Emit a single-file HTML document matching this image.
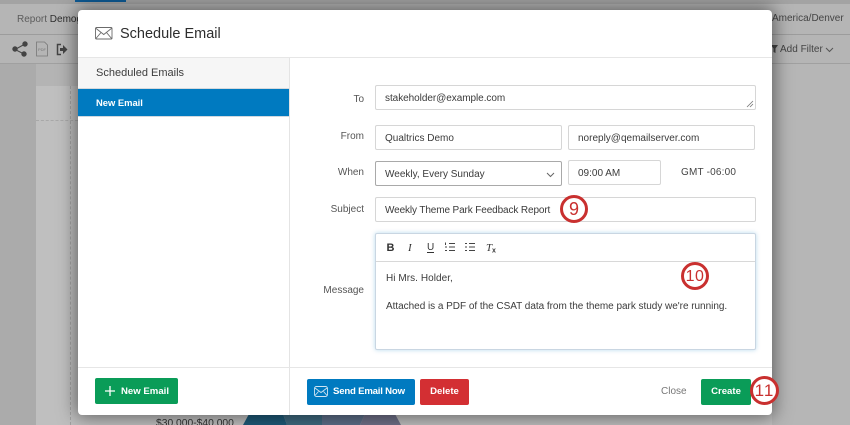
<!DOCTYPE html>
<html><head><meta charset="utf-8">
<style>
html,body{margin:0;padding:0;width:850px;height:425px;overflow:hidden;background:#b4b4b4;font-family:"Liberation Sans",sans-serif}
#w{position:relative;width:850px;height:425px;overflow:hidden;filter:blur(.3px)}
.a{position:absolute;white-space:nowrap}
.t{position:absolute;white-space:nowrap;font-size:10px;line-height:14px;color:#3b3b3b}
.l{position:absolute;right:486px;font-size:10px;line-height:14px;color:#555;white-space:nowrap}
.i{position:absolute;box-sizing:border-box;background:#fff;border:1px solid #d6d6d6;border-radius:2px;font-size:10px;color:#3b3b3b;padding-left:9px;white-space:nowrap}
.b{position:absolute;box-sizing:border-box;border-radius:2px;color:#fff;font-size:9.6px;font-weight:bold;text-align:center;white-space:nowrap}
.c{position:absolute;box-sizing:border-box;border:3px solid #c9302f;border-radius:50%;background:#fff;color:#c9302f;text-align:center}
</style></head><body><div id="w">
<div class="a" style="left:0;top:0;width:850px;height:4px;background:#a3a3a3"></div>
<div class="a" style="left:75px;top:0;width:51px;height:2px;background:#0e5a94"></div>
<div class="a" style="left:0;top:4px;width:850px;height:30px;background:#b5b5b5;border-bottom:1px solid #9c9c9c"></div>
<div class="a" style="left:0;top:35px;width:850px;height:28px;background:#b5b5b5;border-bottom:1px solid #a0a0a0"></div>
<div class="t" style="left:17px;top:13px;color:#5c5c5c">Report <span style="color:#2e2e2e">Demog</span></div>
<div class="t" style="left:772px;top:12px;color:#444">America/Denver</div>
<div class="t" style="left:780px;top:43px;color:#444">Add Filter</div>
<svg class="a" style="left:770px;top:44px" width="10" height="10"><path d="M1 1H8L5.500 4.500V9L3.500 8V4.500Z" fill="#444"/></svg>
<svg class="a" style="left:825px;top:47px" width="10" height="6"><path d="M1 1L4.500 4.500L8 1" fill="none" stroke="#555"/></svg>
<svg class="a" style="left:12px;top:40px" width="60" height="20" fill="none" stroke="#444">
<path d="M13 4L3 9.500L12 14" stroke-width="1"/><circle cx="3" cy="9" r="2.200" fill="#444"/><circle cx="13" cy="4" r="2.200" fill="#444"/><circle cx="12" cy="14" r="2.200" fill="#444"/>
<path d="M24.500 2H32.500L35.500 5V16H24.500Z" stroke="#777" stroke-width=".8"/>
<text x="26" y="11" font-size="4" fill="#777" stroke="none" font-family="Liberation Sans">PDF</text>
<path d="M49 4.500H45.500V14.500H49" stroke-width="1.500"/><path d="M48 8H51V5L55.500 9.500L51 14V11H48Z" fill="#444" stroke="none"/></svg>
<div class="a" style="left:36px;top:86px;width:814px;height:339px;background:#bfbfbf"></div>
<div class="a" style="left:0;top:64px;width:36px;height:361px;background:#ababab"></div>
<div class="a" style="left:772px;top:64px;width:78px;height:361px;background:#b6b6b6"></div>
<div class="a" style="left:70px;top:86px;height:339px;border-left:1px dashed #a2a2a2"></div>
<div class="a" style="left:36px;top:120px;width:42px;border-top:1px dashed #a8a8a8"></div>
<div class="t" style="left:156px;top:417px;color:#333;font-size:10.300px">$30,000-$40,000</div>
<svg class="a" style="left:238px;top:414px" width="170" height="11"><path d="M5 11L11 0H45L49 11Z" fill="#1e5a78"/><path d="M45 0H84V11H49Z" fill="#3f6a80"/><path d="M84 0H127L122 11H84Z" fill="#5c6e88"/><path d="M127 0H157L163 11H122Z" fill="#6f7088"/></svg>
<div class="a" style="left:78px;top:10px;width:694px;height:405px;background:#fff;border-radius:4px;box-shadow:0 0 18px 2px rgba(0,0,0,.5)"></div>
<svg class="a" style="left:95px;top:27px" width="18" height="13" fill="none" stroke="#6b6b6b" stroke-width=".9"><rect x=".5" y=".5" width="16.500" height="11.500" rx="1"/><path d="M.5 1L8.750 7.500L17 1M.5 12L6 5.500M17 12L11.500 5.500"/></svg>
<div class="a" style="left:120px;top:25px;font-size:14.500px;line-height:18px;color:#2d2d2d">Schedule Email</div>
<div class="a" style="left:78px;top:57px;width:694px;height:1px;background:#e6e6e6"></div>
<div class="a" style="left:78px;top:58px;width:211px;height:30px;background:#f6f6f6;border-bottom:1px solid #d5d9dd"></div>
<div class="a" style="left:96px;top:66px;font-size:11px;line-height:14px;color:#3d3d3d">Scheduled Emails</div>
<div class="a" style="left:78px;top:89px;width:211px;height:27px;background:#007ac0;border-bottom:1px solid #cfd8e0"></div>
<div class="a" style="left:96px;top:96px;font-size:9.400px;line-height:14px;color:#fff;font-weight:bold">New Email</div>
<div class="a" style="left:289px;top:58px;width:1px;height:357px;background:#e4e4e4"></div>
<div class="a" style="left:78px;top:367px;width:694px;height:1px;background:#e6e6e6"></div>
<div class="l" style="top:93px">To</div>
<div class="l" style="top:130px">From</div>
<div class="l" style="top:166px">When</div>
<div class="l" style="top:203px">Subject</div>
<div class="l" style="top:284px">Message</div>
<div class="i" style="left:375px;top:85px;width:381px;height:25px;line-height:25px;letter-spacing:-.05px">stakeholder@example.com
<svg class="a" style="right:1px;bottom:1px" width="9" height="9" stroke="#777" stroke-width=".8"><path d="M2 8L8 2M5 8L8 5"/></svg></div>
<div class="i" style="left:375px;top:125px;width:187px;height:25px;line-height:25px">Qualtrics Demo</div>
<div class="i" style="left:568px;top:125px;width:187px;height:25px;line-height:25px">noreply@qemailserver.com</div>
<div class="i" style="left:375px;top:161px;width:187px;height:25px;line-height:25px;border-color:#a9a9a9">Weekly, Every Sunday
<svg class="a" style="right:6px;top:10px" width="9" height="6"><path d="M1 1L4.500 4.500L8 1" fill="none" stroke="#666"/></svg></div>
<div class="i" style="left:568px;top:160px;width:93px;height:25px;line-height:25px">09:00 AM</div>
<div class="t" style="left:681px;top:166px;color:#444;letter-spacing:.2px">GMT -06:00</div>
<div class="i" style="left:375px;top:197px;width:381px;height:25px;line-height:25px;letter-spacing:-.12px">Weekly Theme Park Feedback Report</div>
<div class="i" style="left:375px;top:233px;width:381px;height:117px;border-color:#c9d6e2;box-shadow:0 0 5px rgba(0,122,192,.28)"></div>
<div class="a" style="left:376px;top:261px;width:379px;height:1px;background:#d8d8d8"></div>
<svg class="a" style="left:385px;top:240px" width="116" height="16">
<text x="1.500" y="11" font-size="11" font-weight="bold" fill="#333" font-family="Liberation Sans">B</text>
<text x="23" y="11" font-size="11" font-style="italic" fill="#333" font-family="Liberation Serif">I</text>
<text x="42" y="10" font-size="10" fill="#333" font-family="Liberation Sans">U</text>
<path d="M42 12.500H49" stroke="#333"/>
<path d="M64 3.500H70M64 7H70M64 10.500H70M60.500 2.500V5M60 7H62M60 10.500H62M84 3.500H90M84 7H90M84 10.500H90M80 3.500H82M80 7H82M80 10.500H82" stroke="#444"/>
<text x="101" y="11" font-size="11" font-style="italic" fill="#333" font-family="Liberation Serif">T</text>
<text x="107" y="12.500" font-size="7" font-weight="bold" fill="#333" font-family="Liberation Sans">x</text>
</svg>
<div class="t" style="left:386px;top:272px;letter-spacing:.05px">Hi Mrs. Holder,</div>
<div class="t" style="left:386px;top:299px;letter-spacing:-.03px;margin-top:.5px">Attached is a PDF of the CSAT data from the theme park study we're running.</div>
<div class="b" style="left:95px;top:378px;width:83px;height:26px;line-height:27px;background:#0a9c58;padding-left:26px;text-align:left"><svg class="a" style="left:10px;top:8px" width="10" height="10"><path d="M5 0V10M0 5H10" stroke="#fff" stroke-width="1.300"/></svg>New Email</div>
<div class="b" style="left:307px;top:379px;width:108px;height:26px;line-height:26px;background:#007ac0;padding-left:26px;text-align:left;letter-spacing:-.2px"><svg class="a" style="left:7px;top:7px" width="14" height="11" fill="none" stroke="#cfe4f2" stroke-width=".9"><rect x=".5" y=".5" width="13" height="10" rx="2"/><path d="M1 2L7 6.500L13 2M1 9.500L4.500 5.500M13 9.500L9.500 5.500"/></svg>Send Email Now</div>
<div class="b" style="left:420px;top:379px;width:49px;height:26px;line-height:26px;background:#d32f33">Delete</div>
<div class="t" style="left:661px;top:385px;color:#777">Close</div>
<div class="b" style="left:701px;top:379px;width:50px;height:26px;line-height:26px;background:#0a9c58">Create</div>
<div class="c" style="left:560px;top:195px;width:28px;height:28px;line-height:22px;font-size:18px">9</div>
<div class="c" style="left:681px;top:262px;width:28px;height:28px;line-height:23px;font-size:16px;letter-spacing:.5px">10</div>
<div class="c" style="left:750px;top:376px;width:29px;height:29px;line-height:23px;font-size:17px;letter-spacing:1px">11</div>
</div></body></html>
